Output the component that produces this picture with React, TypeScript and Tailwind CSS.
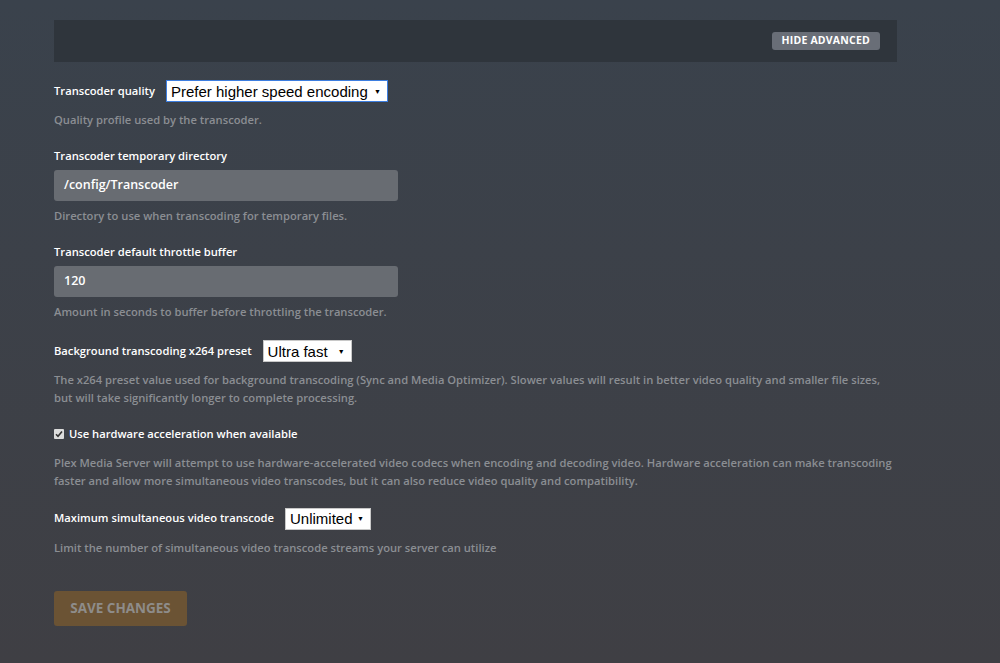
import { useState } from "react";

const Dropdown = ({ value, width, focused }: { value: string; width: string; focused?: boolean }) => {
  return (
    <div
      className={`flex items-center justify-between h-[22px] bg-white pl-[4px] pr-[6px] border ${width} ${
        focused ? "border-[#3d7ee0]" : "border-[#c8c8c8]"
      }`}
    >
      <span className="text-[15px] leading-none text-black font-['Liberation_Sans',Arial,sans-serif]">{value}</span>
      <span className="text-[7px] text-black leading-none">▼</span>
    </div>
  );
};

const Desc = ({ children }: { children: React.ReactNode }) => (
  <p className="text-[11.2px] leading-[18px] font-semibold text-[#8b8e93]">{children}</p>
);

const Label = ({ children }: { children: React.ReactNode }) => (
  <span className="text-[11.2px] font-semibold text-white">{children}</span>
);

export default function App() {
  const [hw, setHw] = useState(true);

  return (
    <div className="min-h-[663px] w-full bg-gradient-to-b from-[#3a424c] to-[#3f3f44] font-['Open_Sans',sans-serif] px-[54px] pt-[20px] pb-[37px]">
      <div className="w-[843px] h-[42px] bg-[#2f353c] flex items-center justify-end pr-[17px]">
        <button
          type="button"
          className="h-[18px] px-[10px] rounded-[3px] bg-[#696e77] text-white text-[10.5px] font-bold tracking-[0.2px]"
        >
          HIDE ADVANCED
        </button>
      </div>

      <div className="w-[845px]">
        {/* Transcoder quality */}
        <div className="mt-[18px] flex items-center gap-[11px]">
          <Label>Transcoder quality</Label>
          <Dropdown value="Prefer higher speed encoding" width="w-[222px]" focused />
        </div>
        <div className="mt-[9px]">
          <Desc>Quality profile used by the transcoder.</Desc>
        </div>

        {/* Temp directory */}
        <div className="mt-[13px]">
          <Label>Transcoder temporary directory</Label>
        </div>
        <div className="mt-[4px] w-[344px] h-[31px] rounded-[3px] bg-[#686c72] flex items-center px-[10px] text-[12.5px] font-semibold text-white">
          /config/Transcoder
        </div>
        <div className="mt-[6px]">
          <Desc>Directory to use when transcoding for temporary files.</Desc>
        </div>

        {/* Throttle buffer */}
        <div className="mt-[13px]">
          <Label>Transcoder default throttle buffer</Label>
        </div>
        <div className="mt-[4px] w-[344px] h-[31px] rounded-[3px] bg-[#686c72] flex items-center px-[10px] text-[12.5px] font-semibold text-white">
          120
        </div>
        <div className="mt-[6px]">
          <Desc>Amount in seconds to buffer before throttling the transcoder.</Desc>
        </div>

        {/* x264 preset */}
        <div className="mt-[19px] flex items-center gap-[11px]">
          <Label>Background transcoding x264 preset</Label>
          <Dropdown value="Ultra fast" width="w-[89px]" />
        </div>
        <div className="mt-[9px]">
          <Desc>
            The x264 preset value used for background transcoding (Sync and Media Optimizer). Slower values will result in
            better video quality and smaller file sizes, but will take significantly longer to complete processing.
          </Desc>
        </div>

        {/* HW acceleration */}
        <label className="mt-[19px] flex items-center gap-[5px] cursor-pointer" onClick={() => setHw(!hw)}>
          <span className="w-[10px] h-[10px] bg-[#dcdcdc] rounded-[1px] flex items-center justify-center">
            {hw && (
              <svg width="8" height="8" viewBox="0 0 8 8">
                <path d="M1 4.2 L3 6.2 L7 1.5" stroke="#333" strokeWidth="1.6" fill="none" />
              </svg>
            )}
          </span>
          <Label>Use hardware acceleration when available</Label>
        </label>
        <div className="mt-[11px]">
          <Desc>
            Plex Media Server will attempt to use hardware-accelerated video codecs when encoding and decoding video.
            Hardware acceleration can make transcoding faster and allow more simultaneous video transcodes, but it can
            also reduce video quality and compatibility.
          </Desc>
        </div>

        {/* Max transcodes */}
        <div className="mt-[18px] flex items-center gap-[11px]">
          <Label>Maximum simultaneous video transcode</Label>
          <Dropdown value="Unlimited" width="w-[86px]" />
        </div>
        <div className="mt-[9px]">
          <Desc>Limit the number of simultaneous video transcode streams your server can utilize</Desc>
        </div>

        <button
          type="button"
          className="mt-[34px] w-[133px] h-[35px] rounded-[3px] bg-[#6b5334] text-[#8e8c8a] text-[13.5px] font-bold"
        >
          SAVE CHANGES
        </button>
      </div>
    </div>
  );
}
